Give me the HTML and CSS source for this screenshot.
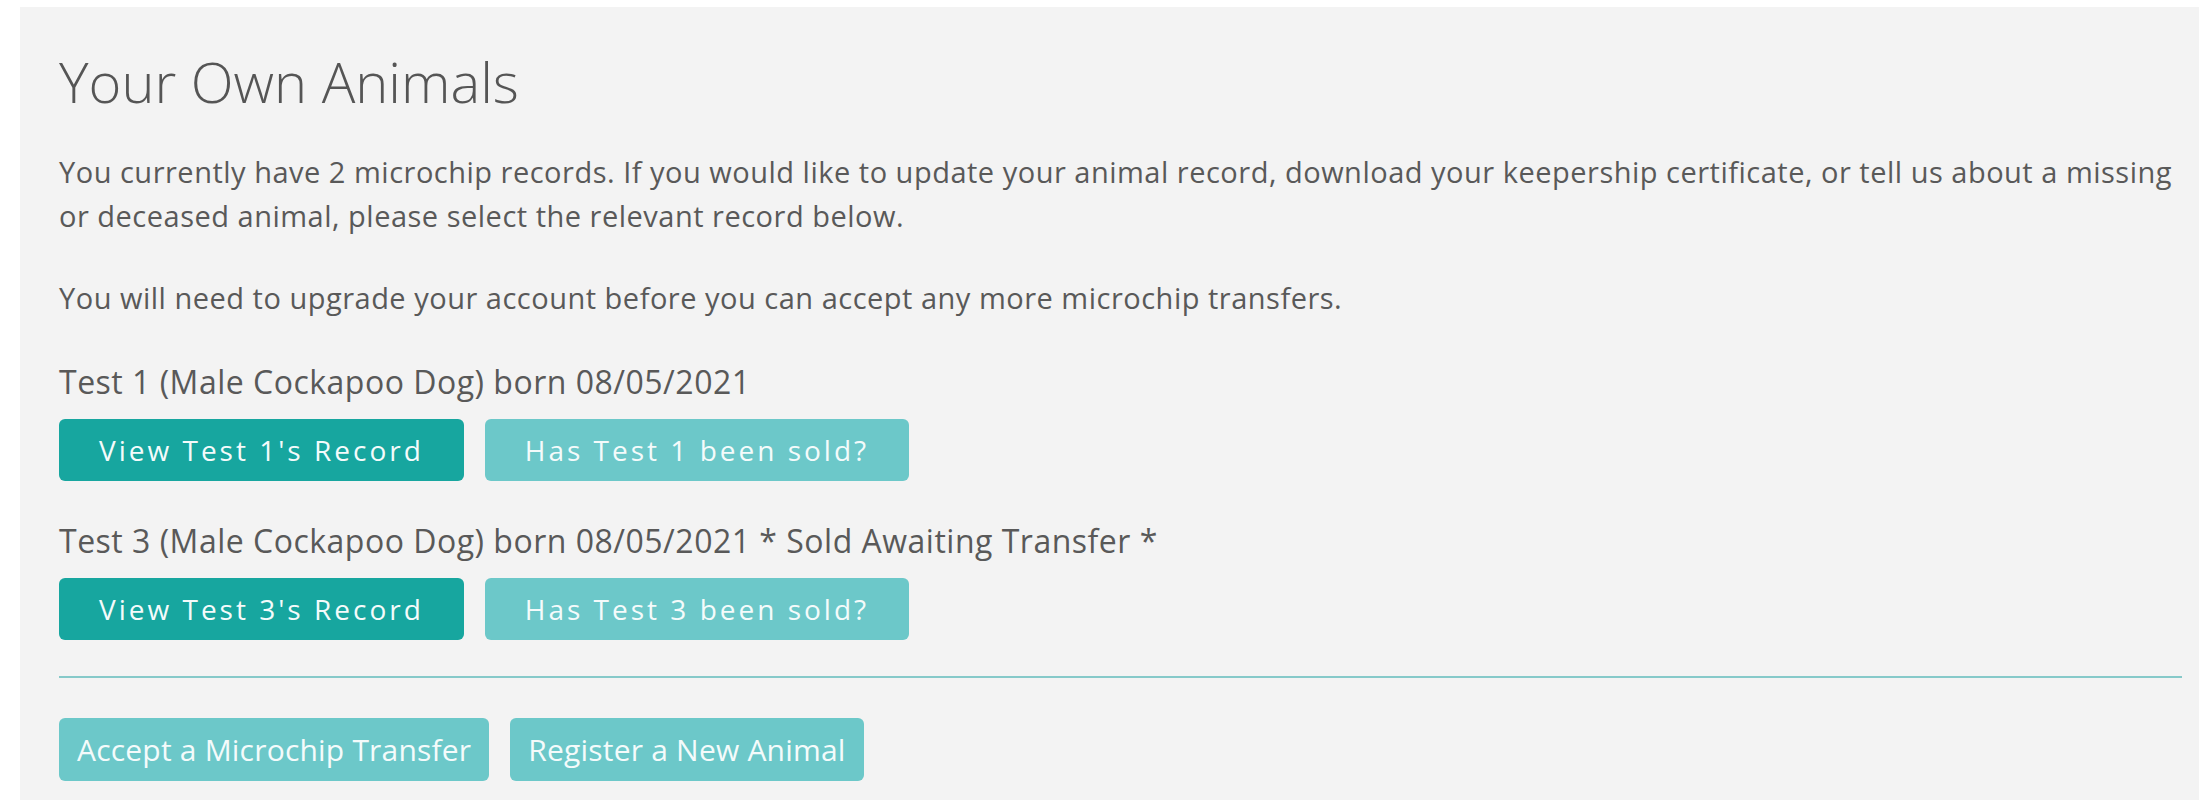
FILE: index.html
```html
<!DOCTYPE html>
<html lang="en">
<head>
    <meta charset="UTF-8" />
    <meta name="viewport" content="width=device-width, initial-scale=1" />
    <title>Your Own Animals</title>
    <link rel="stylesheet" href="styles.css">
</head>
<body>
    <div class="panel">
        <h1>Your Own Animals</h1>
        <p>You currently have 2 microchip records. If you would like to update your animal record, download your keepership certificate, or tell us about a missing or deceased animal, please select the relevant record below.</p>
        <p>You will need to upgrade your account before you can accept any more microchip transfers.</p>

        <div class="record">
            <div class="record-title">Test 1 (Male Cockapoo Dog) born 08/05/2021</div>
            <div class="actions">
                <a class="button dark">View Test 1's Record</a>
                <a class="button light">Has Test 1 been sold?</a>
            </div>
        </div>

        <div class="record">
            <div class="record-title">Test 3 (Male Cockapoo Dog) born 08/05/2021 * Sold Awaiting Transfer *</div>
            <div class="actions">
                <a class="button dark">View Test 3's Record</a>
                <a class="button light">Has Test 3 been sold?</a>
            </div>
        </div>

        <hr class="divider" />

        <div class="actions bottom">
            <a class="button light big">Accept a Microchip Transfer</a>
            <a class="button light big">Register a New Animal</a>
        </div>
    </div>
</body>
</html>
```

FILE: styles.css
```css
body {
    margin: 0;
    background-color: #ffffff;
    font-family: "Open Sans", Lato, sans-serif;
    color: #595959;
    overflow: hidden;
}
.panel {
    margin: 7px 0 0 20px;
    padding: 41px 17px 60px 39px;
    background-color: #f3f3f3;
    min-height: 800px;
}
h1 {
    margin: 0 0 35px 0;
    font-size: 56px;
    font-weight: 300;
    line-height: 1.2;
    color: #555555;
}
p {
    margin: 0 0 38px 0;
    font-size: 29px;
    line-height: 44px;
    letter-spacing: 0.5px;
}
.record {
    margin-bottom: 36px;
}
.record-title {
    font-size: 32px;
    line-height: 48px;
    letter-spacing: 0.5px;
}
.actions {
    display: flex;
    gap: 21px;
    margin-top: 13px;
}
.button {
    display: inline-block;
    height: 62px;
    line-height: 62px;
    padding: 0 40px;
    border-radius: 6px;
    color: #f4fbfb;
    font-size: 28px;
    letter-spacing: 3px;
    cursor: pointer;
}
.dark {
    background-color: #17a69f;
}
.light {
    background-color: #6cc8c9;
}
.big {
    height: 63px;
    line-height: 63px;
    padding: 0 18px;
    font-size: 30px;
    letter-spacing: 0.2px;
}
.divider {
    border: none;
    height: 2px;
    background-color: #86c9c9;
    margin: 0;
    margin-top: 6px;
}
.bottom {
    margin-top: 40px;
}
```
